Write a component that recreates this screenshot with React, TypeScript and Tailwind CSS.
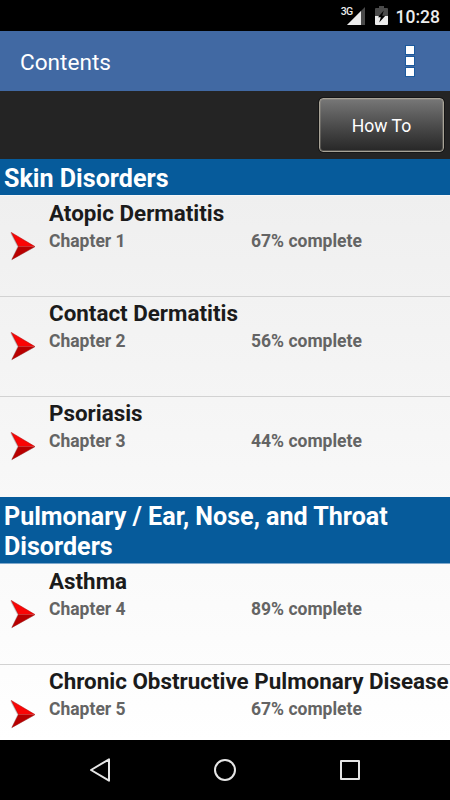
import React from "react";

const sections = [
    {
        title: "Skin Disorders",
        headerClass: "h-[37px] pt-[5px] border-b border-[#f4f6f8]",
        chapters: [
            { name: "Atopic Dermatitis", number: 1, complete: 67 },
            { name: "Contact Dermatitis", number: 2, complete: 56 },
            { name: "Psoriasis", number: 3, complete: 44 },
        ],
    },
    {
        title: "Pulmonary / Ear, Nose, and Throat Disorders",
        headerClass: "h-[67px] pt-[5px] border-b border-[#7fa8cb]",
        chapters: [
            { name: "Asthma", number: 4, complete: 89 },
            { name: "Chronic Obstructive Pulmonary Disease", number: 5, complete: 67 },
        ],
    },
];

function StatusBar() {
    return (
        <div className="h-[31px] shrink-0 bg-black flex items-start justify-end pr-[10px] text-[#ececec]">
            <span className="mt-[6px] text-[10.5px] leading-[11px] font-medium tracking-[-0.6px]">3G</span>
            <svg className="-ml-[6px] mt-[7px]" width="18" height="18" viewBox="0 0 18 18">
                <path d="M18 0V18H0Z" fill="#4a4a4a" />
                <path d="M14 4V18H0Z" fill="#ececec" />
            </svg>
            <svg className="ml-[10px] mt-[6px]" width="13" height="19" viewBox="0 0 13 19">
                <path d="M4 0H9V2H12Q13 2 13 3V10H0V3Q0 2 1 2H4Z" fill="#4a4a4a" />
                <path d="M0 10H13V18Q13 19 12 19H1Q0 19 0 18Z" fill="#ececec" />
                <path d="M8.8 4.5L3 11.3H5.8L4.2 16.5L10.3 9.7H7.2Z" fill="#000" />
            </svg>
            <span className="ml-[8px] mt-[6px] text-[17.5px] leading-[22px] font-medium">10:28</span>
        </div>
    );
}

function ArrowIcon() {
    return (
        <svg className="ml-[10px] mt-[35px] shrink-0" width="28" height="31" viewBox="0 0 28 31">
            <path d="M0.2 2L24.5 16.4L0.9 29.4L7.2 15.8Z" fill="#777" opacity="0.35" />
            <path d="M1.2 1.4L25 15.6H8.5Z" fill="#fa0505" />
            <path d="M8.5 15.6H25L2 28.4Z" fill="#b80000" />
            <path d="M1.2 1.4L25 15.6L2 28.4L8.5 15.6Z" fill="none" stroke="#a80000" strokeWidth="0.5" />
        </svg>
    );
}

function ChapterRow({ chapter, first }: any) {
    return (
        <div className={first ? "flex h-[100px]" : "flex h-[100px] bg-[linear-gradient(#d2d2d2,#d2d2d2)] bg-[length:100%_1px] bg-no-repeat"}>
            <ArrowIcon />
            <div className="ml-[11px] pt-[4px] whitespace-nowrap">
                <div className="text-[22.4px] leading-[27px] font-bold text-[#1b1b1b]">{chapter.name}</div>
                <div className="mt-px flex text-[17.5px] leading-[26px] font-bold text-[#646464]">
                    <span className="w-[202px]">Chapter {chapter.number}</span>
                    <span>{chapter.complete}% complete</span>
                </div>
            </div>
        </div>
    );
}

function NavBar() {
    return (
        <div className="h-[60px] shrink-0 bg-black flex items-center justify-center gap-[101px]">
            <svg width="24" height="26" viewBox="0 0 24 26" fill="none" stroke="#e6e6e6" strokeWidth="2" strokeLinejoin="round">
                <path d="M21 2.3V23.7L3 13Z" />
            </svg>
            <svg width="24" height="24" viewBox="0 0 24 24" fill="none" stroke="#e6e6e6" strokeWidth="2">
                <circle cx="12" cy="12" r="10" />
            </svg>
            <svg width="24" height="24" viewBox="0 0 24 24" fill="none" stroke="#e6e6e6" strokeWidth="2" strokeLinejoin="round">
                <rect x="3" y="3" width="18" height="18" />
            </svg>
        </div>
    );
}

export default function App() {
    return (
        <div className="w-[450px] h-[800px] flex flex-col overflow-hidden bg-black font-[Roboto,sans-serif]">
            <StatusBar />

            {/* App bar */}
            <div className="h-[60px] shrink-0 bg-[#4169a3] flex items-center justify-between pl-5 pr-[36px]">
                <h1 className="mt-[4px] text-[22.6px] leading-[28px] text-white">Contents</h1>
                <button aria-label="More options" className="flex flex-col gap-[3px]">
                    <span className="w-[8px] h-[8px] bg-white outline outline-[#1c5a9d]"></span>
                    <span className="w-[8px] h-[8px] bg-white outline outline-[#1c5a9d]"></span>
                    <span className="w-[8px] h-[8px] bg-white outline outline-[#1c5a9d]"></span>
                </button>
            </div>

            {/* Toolbar */}
            <div className="h-[68px] shrink-0 bg-[#242424] flex justify-end pt-[7px] pr-[6px]">
                <button className="w-[125px] h-[54px] pt-[3px] rounded-[4px] border border-[#a8a397] outline outline-[#151515] bg-linear-to-b from-[#777777] to-[#272727] shadow-[inset_0_0_0_1px_rgba(161,156,144,0.35)] text-white text-[17.6px]">
                    How To
                </button>
            </div>

            {/* Chapter list */}
            <div className="flex-1 min-h-0 overflow-hidden bg-linear-to-b from-[#eeeeee] to-white">
                {sections.map((section, i) => (
                    <div key={section.title} className={i === 0 ? "pb-px" : ""}>
                        <h2 className={`${section.headerClass} pl-[4px] pr-10 bg-[#065b9b] text-white text-[25.1px] leading-[30px] font-bold`}>
                            {section.title}
                        </h2>
                        {section.chapters.map((chapter, j) => (
                            <ChapterRow key={chapter.number} chapter={chapter} first={j === 0} />
                        ))}
                    </div>
                ))}
            </div>

            <NavBar />
        </div>
    );
}
